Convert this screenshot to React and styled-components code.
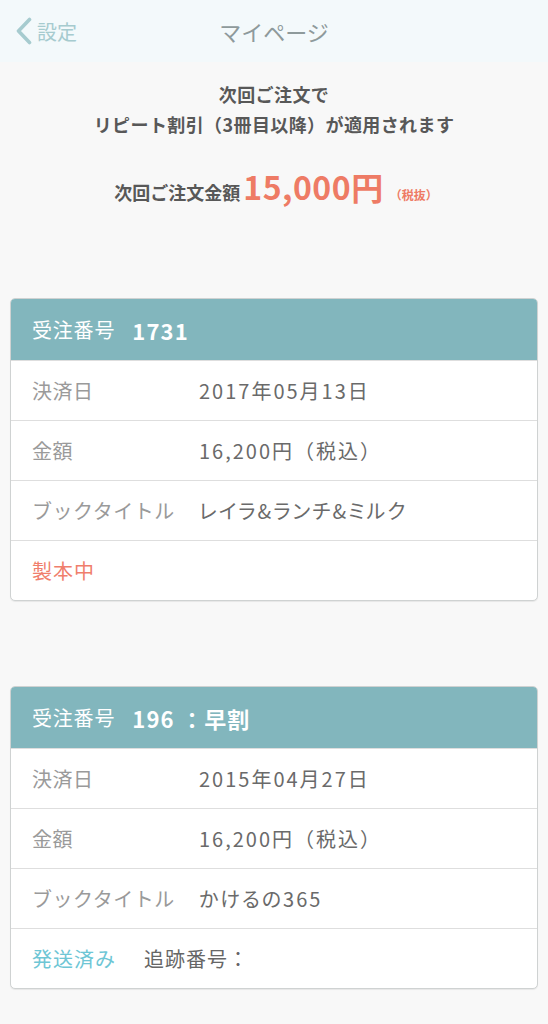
import styled, { createGlobalStyle } from "styled-components";

const GlobalStyle = createGlobalStyle`
  body {
    margin: 0;
    background: #f8f8f8;
    font-family: "Noto Sans CJK JP", "Noto Sans", sans-serif;
  }
`;

const Page = styled.div`
  min-height: 100vh;
  background: #f8f8f8;
`;

const NavBar = styled.header`
  height: 62px;
  background: #f3f9fb;
  display: flex;
  align-items: center;
  justify-content: center;
  position: relative;
`;

const BackButton = styled.div`
  position: absolute;
  left: 15px;
  top: 0;
  height: 100%;
  display: flex;
  align-items: center;
  gap: 4px;
  color: #a6cbcf;
  font-size: 20px;
`;

const NavTitle = styled.h1`
  margin: 0;
  font-size: 22px;
  font-weight: 400;
  color: #8e9a9b;
`;

const Intro = styled.section`
  padding-top: 17px;
  text-align: center;
  color: #585858;
  font-weight: 700;
  font-size: 18px;
`;

const IntroLine = styled.div`
  line-height: 30px;
  letter-spacing: 0.4px;
`;

const AmountLine = styled.div`
  margin-top: 25px;
  height: 44px;
  line-height: 44px;
  display: flex;
  align-items: baseline;
  justify-content: center;
  padding-left: 4px;
`;

const BigPrice = styled.span`
  color: #ee7b65;
  font-size: 32px;
  font-weight: 700;
  letter-spacing: 0.5px;
  margin-left: 3px;
`;

const TaxNote = styled.span`
  color: #ee7b65;
  font-size: 12px;
  font-weight: 700;
  margin-left: 6px;
`;

const Orders = styled.div`
  padding: 90px 10px 0;
  display: flex;
  flex-direction: column;
  gap: 85px;
`;

const Card = styled.div`
  border: 1px solid #cfd2d2;
  border-radius: 5px;
  overflow: hidden;
  background: #fff;
  box-shadow: 0 1px 1px rgba(0, 0, 0, 0.07);
`;

const CardHeader = styled.div`
  height: 61px;
  background: #82b6bd;
  display: flex;
  align-items: center;
  padding-left: 21px;
  color: #fff;
`;

const HeaderLabel = styled.span`
  font-size: 20px;
  letter-spacing: 0.8px;
`;

const HeaderNumber = styled.span`
  font-size: 22px;
  font-weight: 700;
  margin-left: 17px;
  letter-spacing: 1.2px;
`;

const Row = styled.div`
  height: 59px;
  border-top: 1px solid #dedede;
  display: flex;
  align-items: center;
  padding-left: 21px;
  font-size: 20px;
`;

const Label = styled.span`
  width: 167px;
  flex-shrink: 0;
  color: #9a9a9a;
  letter-spacing: 0.5px;
`;

const Value = styled.span`
  color: #6a6a6a;
  letter-spacing: 2px;
  font-feature-settings: ${(p) => (p.$palt ? '"palt"' : "normal")};
`;

const Status = styled.span`
  color: ${(p) => p.$color};
  letter-spacing: 1px;
`;

const Tracking = styled.span`
  color: #666;
  margin-left: 28px;
  letter-spacing: 1px;
`;

const Chevron = () => (
  <svg width="18" height="28" viewBox="0 0 18 28">
    <path
      d="M14.5 2.5 L3.5 14 L14.5 25.5"
      fill="none"
      stroke="#a6cbcf"
      strokeWidth="3.6"
      strokeLinecap="round"
      strokeLinejoin="round"
    />
  </svg>
);

const orders = [
  {
    number: "1731",
    date: "2017年05月13日",
    price: "16,200円（税込）",
    title: "レイラ&ランチ&ミルク",
    status: "製本中",
    statusColor: "#f07e6c",
  },
  {
    number: "196 ：早割",
    date: "2015年04月27日",
    price: "16,200円（税込）",
    title: "かけるの365",
    status: "発送済み",
    statusColor: "#6ec6d5",
    tracking: true,
  },
];

export default function App() {
  return (
    <Page>
      <GlobalStyle />
      <NavBar>
        <BackButton>
          <Chevron />
          設定
        </BackButton>
        <NavTitle>マイページ</NavTitle>
      </NavBar>
      <Intro>
        <IntroLine>次回ご注文で</IntroLine>
        <IntroLine>リピート割引（3冊目以降）が適用されます</IntroLine>
        <AmountLine>
          次回ご注文金額<BigPrice>15,000円</BigPrice>
          <TaxNote>（税抜）</TaxNote>
        </AmountLine>
      </Intro>
      <Orders>
        {orders.map((o) => (
          <Card key={o.number}>
            <CardHeader>
              <HeaderLabel>受注番号</HeaderLabel>
              <HeaderNumber>{o.number}</HeaderNumber>
            </CardHeader>
            <Row>
              <Label>決済日</Label>
              <Value>{o.date}</Value>
            </Row>
            <Row>
              <Label>金額</Label>
              <Value>{o.price}</Value>
            </Row>
            <Row>
              <Label>ブックタイトル</Label>
              <Value $palt>{o.title}</Value>
            </Row>
            <Row>
              <Status $color={o.statusColor}>{o.status}</Status>
              {o.tracking && <Tracking>追跡番号：</Tracking>}
            </Row>
          </Card>
        ))}
      </Orders>
    </Page>
  );
}
